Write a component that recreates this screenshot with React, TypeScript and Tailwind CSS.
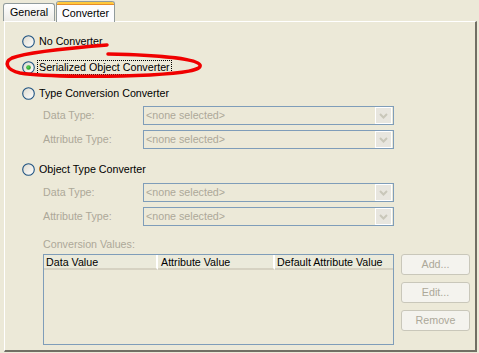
import React from "react";

const font = { fontFamily: '"Liberation Sans", Arial, sans-serif' };

function Radio({ checked }: { checked?: boolean }) {
  return (
    <svg width="13" height="13" viewBox="0 0 13 13" className="shrink-0">
      <defs>
        <linearGradient id="rg" x1="0" y1="0" x2="1" y2="1">
          <stop offset="0" stopColor="#DCD9CD" />
          <stop offset="1" stopColor="#FFFFFF" />
        </linearGradient>
        <radialGradient id="dot" cx="0.4" cy="0.4" r="0.6">
          <stop offset="0" stopColor="#5BD85B" />
          <stop offset="1" stopColor="#1E951E" />
        </radialGradient>
      </defs>
      <circle cx="6.5" cy="6.5" r="5.8" fill="url(#rg)" stroke="#1C5180" strokeWidth="1.1" />
      {checked && <circle cx="6.5" cy="6.5" r="2.3" fill="url(#dot)" />}
    </svg>
  );
}

function Select() {
  return (
    <div className="flex h-[19px] w-[251px] items-center border border-[#7F9DB9] bg-[#ECE9D8]">
      <span className="flex-1 pl-[2px] text-[10.7px] leading-none text-[#ACA899]">&lt;none selected&gt;</span>
      <div className="mr-[1px] flex h-[17px] w-[17px] items-center justify-center border border-white bg-[#E8E6DF]">
        <svg width="9" height="6" viewBox="0 0 9 6">
          <path d="M1 1 L4.5 4.5 L8 1" fill="none" stroke="#C9C7BA" strokeWidth="2" />
        </svg>
      </div>
    </div>
  );
}

function FieldRow({ label, className = "" }: { label: string; className?: string }) {
  return (
    <div className={`flex items-center pl-[38px] ${className}`}>
      <span className="w-[100px] text-[10.7px] leading-none text-[#ACA899]">{label}</span>
      <Select />
    </div>
  );
}

function RadioRow({ label, checked, className = "" }: { label: string; checked?: boolean; className?: string }) {
  return (
    <div className={`flex h-[14px] items-center gap-[2px] pl-[17px] ${className}`}>
      <Radio checked={checked} />
      <span
        className={`px-[1px] text-[10.7px] leading-[13px] text-black ${
          checked ? "border border-dotted border-black" : "border border-transparent"
        }`}
      >
        {label}
      </span>
    </div>
  );
}

function Btn({ label }: { label: string }) {
  return (
    <div className="flex h-[21px] w-[69px] items-center justify-center rounded-[3px] border border-[#C9C7BA] bg-[#F4F3EE] text-[10.7px] text-[#ACA899]">
      {label}
    </div>
  );
}

export default function App() {
  return (
    <div className="relative h-[353px] w-[479px] overflow-hidden bg-[#ECE9D8]" style={font}>
      {/* tabs */}
      <div className="flex h-[21px] items-end pl-[3px]">
        <div className="flex h-[18px] w-[52px] items-center justify-center rounded-t-[3px] border border-b-0 border-[#919B9C] bg-gradient-to-b from-white to-[#ECEBE6] text-[10.7px] text-black">
          General
        </div>
        <div className="relative z-10 ml-[1px] mb-[-1px] flex h-[21px] w-[59px] flex-col rounded-t-[3px] border border-b-0 border-[#919B9C] bg-[#FCFCFE]">
          <div className="h-[3px] rounded-t-[2px] bg-[#FFC83C] border-b border-[#E68B2C]" />
          <div className="flex flex-1 items-center justify-center text-[10.7px] text-black">Converter</div>
        </div>
      </div>
      {/* panel */}
      <div className="ml-[4px] h-[331px] w-[473px] border-l border-t border-white border-b-2 border-r-2 border-b-[#716F64] border-r-[#716F64]">
        <div className="flex flex-col pt-[12px]">
          <RadioRow label="No Converter" />
          <RadioRow label="Serialized Object Converter" checked className="mt-[12px]" />
          <RadioRow label="Type Conversion Converter" className="mt-[12px]" />
          <FieldRow label="Data Type:" className="mt-[6px]" />
          <FieldRow label="Attribute Type:" className="mt-[5px]" />
          <RadioRow label="Object Type Converter" className="mt-[13px]" />
          <FieldRow label="Data Type:" className="mt-[7px]" />
          <FieldRow label="Attribute Type:" className="mt-[5px]" />
          <div className="mt-[13px] pl-[38px] text-[10.7px] leading-none text-[#ACA899]">Conversion Values:</div>
          <div className="mt-[4px] flex pl-[38px]">
            <div className="h-[91px] w-[351px] border border-[#7F9DB9] bg-[#ECE9D8]">
              <div className="flex h-[15px] text-[10.7px] leading-[15px] text-black">
                <div className="w-[114px] border-b-2 border-r-2 border-b-[#D6D2C2] border-r-white pl-[2px] bg-[#EBEADB]">Data Value</div>
                <div className="w-[117px] border-b-2 border-r-2 border-b-[#D6D2C2] border-r-white pl-[3px] bg-[#EBEADB]">Attribute Value</div>
                <div className="flex-1 border-b-2 border-b-[#D6D2C2] pl-[2px] bg-[#EBEADB] whitespace-nowrap">Default Attribute Value</div>
              </div>
            </div>
            <div className="ml-[7px] flex flex-col gap-[7px]">
              <Btn label="Add..." />
              <Btn label="Edit..." />
              <Btn label="Remove" />
            </div>
          </div>
        </div>
      </div>
      {/* red hand-drawn ellipse */}
      <svg className="pointer-events-none absolute left-0 top-0" width="479" height="353" viewBox="0 0 479 353">
        <path
          d="M107 45 C70 48, 25 53, 12 58 C4 62, 6 70, 20 73 C45 77, 110 77, 150 75 C185 73, 202 70, 200 65 C197 59, 160 55, 108 54"
          fill="none"
          stroke="#F00000"
          strokeWidth="3.5"
          strokeLinecap="round"
        />
      </svg>
    </div>
  );
}
